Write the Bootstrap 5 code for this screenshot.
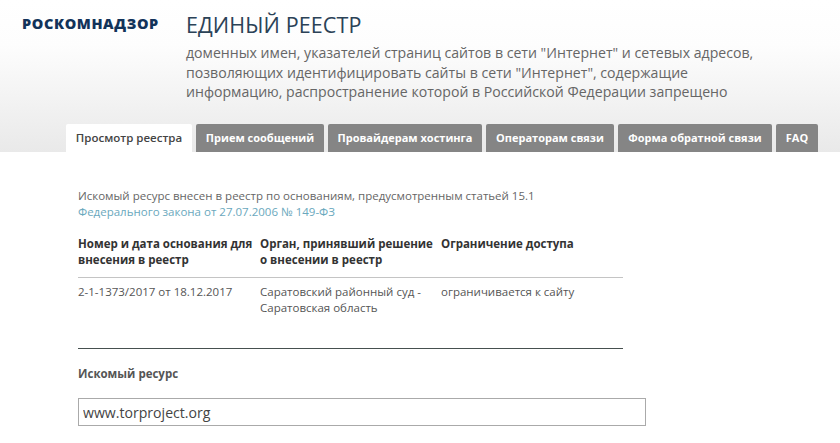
<!DOCTYPE html>
<html lang="ru">
<head>
<meta charset="utf-8">
<title>Единый реестр</title>
<link rel="stylesheet" href="https://cdn.jsdelivr.net/npm/bootstrap@5.3.0/dist/css/bootstrap.min.css">
<style>
html,body{height:443px;overflow:hidden;}
body{font-family:"Open Sans",sans-serif;background:#fff;color:#555;}
.rk-head{height:152px;background:linear-gradient(#fff 0,#fdfdfd 30%,#e9e9e9 100%);display:flex;flex-direction:column;}
.rk-top{display:flex;height:124px;}
.rk-logo{width:186px;padding:14px 0 0 22px;font-size:14.5px;font-weight:800;color:#12335a;letter-spacing:.6px;line-height:20px;white-space:nowrap;}
.rk-title{font-size:21.5px;line-height:28px;color:#2b4257;margin:11px 0 0;font-weight:400;letter-spacing:.1px;}
.rk-desc{font-size:14.12px;line-height:19.7px;color:#666;margin:4px 0 0;white-space:nowrap;}
.rk-tabs{display:flex;gap:4px;padding-left:66px;height:28px;}
.rk-tab{display:flex;align-items:center;justify-content:center;height:28px;background:#858585;color:#fff;font-size:11px;font-weight:700;border-radius:2px 2px 0 0;text-decoration:none;white-space:nowrap;}
.rk-tab.rk-on{background:#fff;color:#444;font-weight:600;font-size:11.5px;}
.rk-w1{width:126px}.rk-w2{width:128px}.rk-w3{width:154px}.rk-w4{width:128px}.rk-w5{width:154px}.rk-w6{width:42px}
.rk-body{padding:36px 0 0 78px;font-size:11.5px;line-height:16px;}
.rk-note{margin:0;color:#666;}
.rk-link{color:#6aa8bd;text-decoration:none;display:block;}
.rk-tbl{width:545px;margin-top:16px;border-bottom:1px solid #46504f;padding-bottom:32px;}
.rk-row{display:grid;grid-template-columns:182px 181px 182px;}
.rk-hrow{color:#333;font-weight:700;line-height:16px;padding-bottom:9px;border-bottom:1px solid #c4c4c4;}
.rk-drow{color:#555;padding-top:6px;}
.rk-label{font-weight:700;color:#555;margin:17px 0 0;}
.rk-input{display:block;box-sizing:border-box;width:568px;height:28px;margin-top:16px;border:1px solid #aaa;border-radius:0;padding:0 4px;font-size:14.1px;color:#444;font-family:inherit;background:#fff;}
</style>
</head>
<body>
<header class="rk-head">
  <div class="rk-top">
    <div class="rk-logo">РОСКОМНАДЗОР</div>
    <div>
      <h1 class="rk-title">ЕДИНЫЙ РЕЕСТР</h1>
      <p class="rk-desc">доменных имен, указателей страниц сайтов в сети "Интернет" и сетевых адресов,<br>позволяющих идентифицировать сайты в сети "Интернет", содержащие<br>информацию, распространение которой в Российской Федерации запрещено</p>
    </div>
  </div>
  <nav class="rk-tabs">
    <a class="rk-tab rk-on rk-w1" href="#">Просмотр реестра</a>
    <a class="rk-tab rk-w2" href="#">Прием сообщений</a>
    <a class="rk-tab rk-w3" href="#">Провайдерам хостинга</a>
    <a class="rk-tab rk-w4" href="#">Операторам связи</a>
    <a class="rk-tab rk-w5" href="#">Форма обратной связи</a>
    <a class="rk-tab rk-w6" href="#">FAQ</a>
  </nav>
</header>
<main class="rk-body">
  <p class="rk-note">Искомый ресурс внесен в реестр по основаниям, предусмотренным статьей 15.1<a class="rk-link" href="#">Федерального закона от 27.07.2006 № 149-ФЗ</a></p>
  <div class="rk-tbl">
    <div class="rk-row rk-hrow">
      <div>Номер и дата основания для внесения в реестр</div>
      <div>Орган, принявший решение о внесении в реестр</div>
      <div>Ограничение доступа</div>
    </div>
    <div class="rk-row rk-drow">
      <div>2-1-1373/2017 от 18.12.2017</div>
      <div>Саратовский районный суд - Саратовская область</div>
      <div>ограничивается к сайту</div>
    </div>
  </div>
  <p class="rk-label">Искомый ресурс</p>
  <input class="rk-input" type="text" value="www.torproject.org">
</main>
<script src="https://cdn.jsdelivr.net/npm/bootstrap@5.3.0/dist/js/bootstrap.bundle.min.js"></script>
</body>
</html>
